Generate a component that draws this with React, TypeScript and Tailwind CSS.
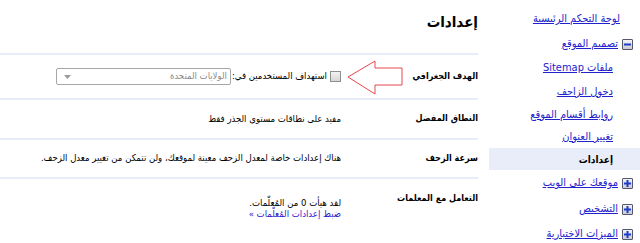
import React from "react";

const font = "font-['DejaVu_Sans_Condensed','DejaVu_Sans','Liberation_Sans',sans-serif]";

function ToggleBox({ open }: { open: boolean }) {
  return (
    <span className="flex h-[11px] w-[11px] items-center justify-center rounded-[1px] border border-[#54566b] bg-gradient-to-b from-[#f4f4f6] to-[#c9cad3]">
      <svg width="9" height="9" viewBox="0 0 9 9">
        <rect x="1" y="3.5" width="7" height="2" fill="#1f3dc9" />
        {open ? null : <rect x="3.5" y="1" width="2" height="7" fill="#1f3dc9" />}
      </svg>
    </span>
  );
}

type NavItem = {
  label: string;
  level: 0 | 1;
  icon?: "open" | "closed";
  active?: boolean;
  h: number;
};

const nav: NavItem[] = [
  { label: "لوحة التحكم الرئيسية", level: 0, h: 25 },
  { label: "تصميم الموقع", level: 0, icon: "open", h: 25 },
  { label: "ملفات Sitemap", level: 1, h: 23 },
  { label: "دخول الزاحف", level: 1, h: 24 },
  { label: "روابط أقسام الموقع", level: 1, h: 22 },
  { label: "تغيير العنوان", level: 1, h: 22 },
  { label: "إعدادات", level: 1, active: true, h: 22 },
  { label: "موقعك على الويب", level: 0, icon: "closed", h: 27 },
  { label: "التشخيص", level: 0, icon: "closed", h: 25 },
  { label: "الميزات الاختبارية", level: 0, icon: "closed", h: 24 },
];

function Sidebar() {
  return (
    <aside className="w-[151px] shrink-0 pt-[7px]">
      {nav.map((item) => (
        <div
          key={item.label}
          style={{ height: item.h }}
          className={
            "flex items-center gap-[4px] text-[11px] " +
            (item.active ? "bg-[#e8edf9] " : "") +
            (item.level === 1 ? "pr-[27px]" : item.icon ? "pr-[7px]" : "pr-[20px]")
          }
        >
          {item.icon ? <ToggleBox open={item.icon === "open"} /> : null}
          {item.active ? (
            <span className="text-[10px] font-bold text-black">{item.label}</span>
          ) : (
            <a href="#" className="text-[#2222cc] underline">
              {item.label}
            </a>
          )}
        </div>
      ))}
    </aside>
  );
}

function Row({
  label,
  h,
  children,
}: {
  label: string;
  h: number;
  children: React.ReactNode;
}) {
  return (
    <div style={{ height: h }} className="flex items-center border-t-2 border-[#e6ecf8]">
      <div className="w-[137px] shrink-0 text-[9px] font-bold text-black">{label}</div>
      <div className="text-[9.5px] text-black">{children}</div>
    </div>
  );
}

export default function App() {
  return (
    <div dir="rtl" className={"flex h-[243px] w-[640px] overflow-hidden bg-white " + font}>
      <Sidebar />
      <main className="mr-[11px] w-[478px]">
        <div className="flex h-[53px] items-start pt-[11px]">
          <h1 className="text-[15px] font-bold text-black">إعدادات</h1>
        </div>

        <Row label="الهدف الجغرافي" h={45}>
          <div className="flex items-center gap-[1px]">
            <span className="ml-[2px] h-[11px] w-[11px] border border-[#8f8f8f] bg-gradient-to-b from-[#f2f2f2] to-[#d6d6d6]" />
            <span>استهداف المستخدمين في:</span>
            <div className="flex h-[17px] w-[175px] items-center justify-between rounded-[2px] border border-[#a6a6a6] bg-white px-[3px] text-[#8a8a8a]">
              <span>الولايات المتحدة</span>
              <svg width="7" height="4" viewBox="0 0 7 4" className="ml-[4px]">
                <path d="M0 0 L7 0 L3.5 4 Z" fill="#9a9a9a" />
              </svg>
            </div>
          </div>
          <svg
            width="58"
            height="37"
            viewBox="0 0 58 37"
            className="absolute left-[346px] top-[59px]"
          >
            <path
              d="M2 18 L29 2 L29 9 L56 9 L56 26 L29 26 L29 35 Z"
              fill="white"
              stroke="#e8464d"
              strokeWidth="1"
            />
          </svg>
        </Row>

        <Row label="النطاق المفضل" h={40}>
          مفيد على نطاقات مستوى الجذر فقط
        </Row>

        <Row label="سرعة الزحف" h={39}>
          <span className="whitespace-nowrap">
            هناك إعدادات خاصة لمعدل الزحف معينة لموقعك، ولن تتمكن من تغيير معدل الزحف.
          </span>
        </Row>

        <div className="flex items-start border-t-2 border-[#e6ecf8]">
          <div className="mt-[13px] w-[137px] shrink-0 text-[9px] font-bold text-black">
            التعامل مع المعلمات
          </div>
          <div className="mt-[18px] text-[9.5px] leading-[11px] text-black">
            <div>لقد هيأت 0 من المُعلّمات.</div>
            <a href="#" className="text-[#2a22cc]">
              ضبط إعدادات المُعلّمات »
            </a>
          </div>
        </div>
      </main>
    </div>
  );
}
